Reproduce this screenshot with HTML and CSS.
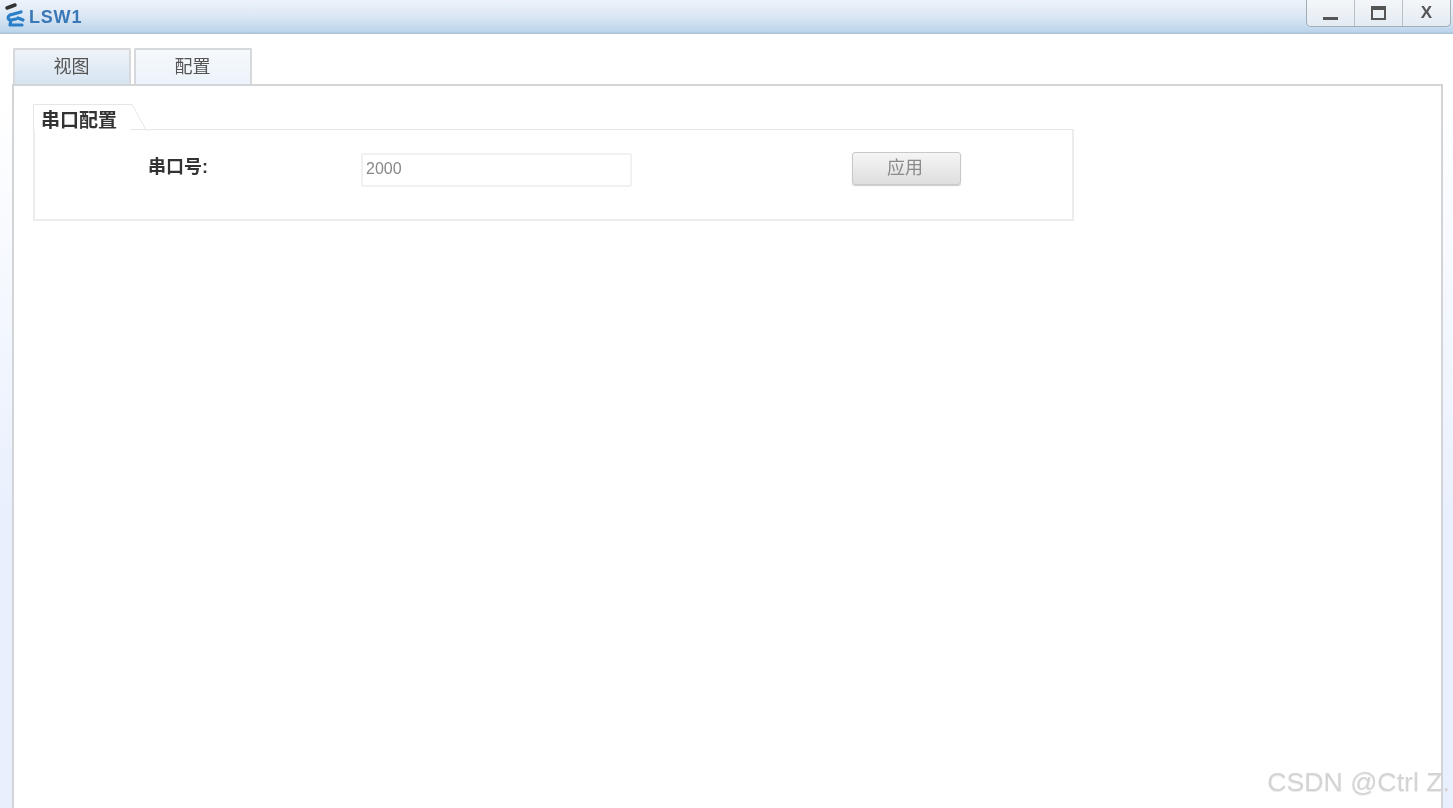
FILE: index.html
```html
<!DOCTYPE html>
<html lang="zh">
<head>
<meta charset="utf-8">
<title>LSW1</title>
<link rel="stylesheet" href="styles.css">
</head>
<body>
<div class="window">
  <header class="titlebar">
    <svg class="logo" width="24" height="28" viewBox="0 0 24 28">
      <path d="M5 8 L13 5" stroke="#333" stroke-width="3.5" stroke-linecap="round" fill="none"/>
      <path d="M8 15 L19 12 M8 15 C5 17 6 20 9 20 L14 19 M9 20 L8 25 M8 25 L20 25 M16 18 L21 20" stroke="#2b7fc8" stroke-width="3.2" stroke-linecap="round" fill="none"/>
    </svg>
    <span class="title">LSW1</span>
    <div class="controls">
      <button class="ctl"><span class="min"></span></button>
      <button class="ctl"><span class="max"></span></button>
      <button class="ctl close">X</button>
    </div>
  </header>
  <main class="content">
    <nav class="tabs">
      <div class="tab tab-dark">视图</div>
      <div class="tab">配置</div>
    </nav>
    <section class="panel">
      <div class="legend">
        <span class="legend-text">串口配置</span>
        <svg class="legend-slant" width="20" height="27" viewBox="0 0 20 27"><path d="M0 .5 H2 L16 26 H20" fill="#fff" stroke="#e6e6e6"/></svg>
      </div>
      <div class="group">
        <label class="label">串口号:</label>
        <input class="input" value="2000">
        <button class="apply">应用</button>
      </div>
    </section>
  </main>
  <div class="watermark">CSDN @Ctrl Z.</div>
</div>
</body>
</html>
```
FILE: styles.css
```css
* { box-sizing: border-box; }
html, body { margin: 0; height: 100%; overflow: hidden; background: #fff; }
body { font-family: "Liberation Sans", "Noto Sans CJK SC", sans-serif; }
.window {
  position: relative;
  width: 1453px;
  height: 808px;
  display: flex;
  flex-direction: column;
  overflow: hidden;
  filter: blur(0.7px);
}
.titlebar {
  flex: none;
  height: 34px;
  display: flex;
  align-items: flex-start;
  padding-left: 2px;
  background: linear-gradient(#eef3fa 0%, #dce8f5 45%, #bdd6ec 92%, #a5bfd6 100%);
}
.logo { flex: none; margin-top: 0; }
.title {
  margin: 6px 0 0 3px;
  font-size: 18px;
  line-height: 22px;
  font-weight: 700;
  letter-spacing: 0.8px;
  color: #3b78b8;
}
.controls {
  margin-left: auto;
  margin-right: 2px;
  width: 145px;
  height: 27px;
  display: flex;
  background: linear-gradient(#f4f6f9, #e3ebf3);
  border: 1px solid #a4acb6;
  border-top: 0;
  border-radius: 0 0 5px 5px;
}
.ctl {
  flex: 1;
  padding: 0;
  border: 0;
  border-left: 1px solid #b7c0ca;
  background: transparent;
  display: flex;
  align-items: center;
  justify-content: center;
}
.ctl:first-child { border-left: 0; }
.min { width: 15px; height: 3px; background: #555; margin-top: 11px; }
.max { width: 15px; height: 14px; border: 2px solid #555; border-top-width: 4px; }
.close { font-size: 17px; font-weight: 700; color: #555; }
.content {
  flex: 1;
  min-height: 0;
  display: flex;
  flex-direction: column;
  padding: 0 10px 0 12px;
  background: linear-gradient(#fff 60px, #e9f0fd 480px);
}
.tabs {
  flex: none;
  display: flex;
  gap: 3px;
  height: 50px;
  padding: 14px 0 0 1px;
}
.tab {
  width: 118px;
  height: 37px;
  border: 2px solid #d6d8db;
  border-bottom: 0;
  border-radius: 2px 2px 0 0;
  background: linear-gradient(#f6f9fd, #ecf3fa);
  color: #555;
  font-size: 18px;
  line-height: 35px;
  text-align: center;
  text-indent: -1px;
}
.tab-dark { background: linear-gradient(#eff3f8, #d6e4f1); }
.panel {
  flex: 1;
  min-height: 0;
  background: #fff;
  border: 2px solid #d2d4d7;
  border-bottom: 0;
  padding: 18px 0 0 19px;
}
.legend { display: flex; height: 26px; margin-bottom: -1px; }
.legend-text {
  width: 97px;
  height: 26px;
  border: 1px solid #e6e6e6;
  border-width: 1px 0 0 1px;
  padding-left: 7px;
  font-size: 19px;
  line-height: 32px;
  font-weight: 700;
  color: #333;
  background: #fff;
}
.legend-slant { flex: none; }
.group {
  width: 1041px;
  height: 92px;
  border: 2px solid #ececec;
  border-top: 1px solid #e6e6e6;
  display: flex;
  align-items: flex-start;
  padding: 24px 0 0 113px;
}
.label {
  width: 213px;
  font-size: 18px;
  line-height: 26px;
  font-weight: 700;
  color: #333;
}
.input {
  width: 271px;
  height: 34px;
  margin-top: -1px;
  border: 2px solid #f1f1f3;
  border-radius: 2px;
  padding: 0 3px 3px;
  font: 16px "Liberation Sans", sans-serif;
  color: #888;
  outline: 0;
}
.apply {
  margin: -2px 0 0 220px;
  width: 109px;
  height: 33px;
  border: 1px solid #c8c8c8;
  border-radius: 3px;
  background: linear-gradient(#f5f5f5, #dedede);
  box-shadow: 0 1px 1px #ccc;
  color: #8a8a8a;
  font: 18px "Liberation Sans", "Noto Sans CJK SC", sans-serif;
  padding: 0 3px 5px 0;
}
.watermark {
  position: absolute;
  right: 3px;
  top: 766px;
  font-size: 26.7px;
  line-height: 32px;
  color: #d4d4d4;
  text-shadow: 0 1px 1px #e8e8e8;
}
```
